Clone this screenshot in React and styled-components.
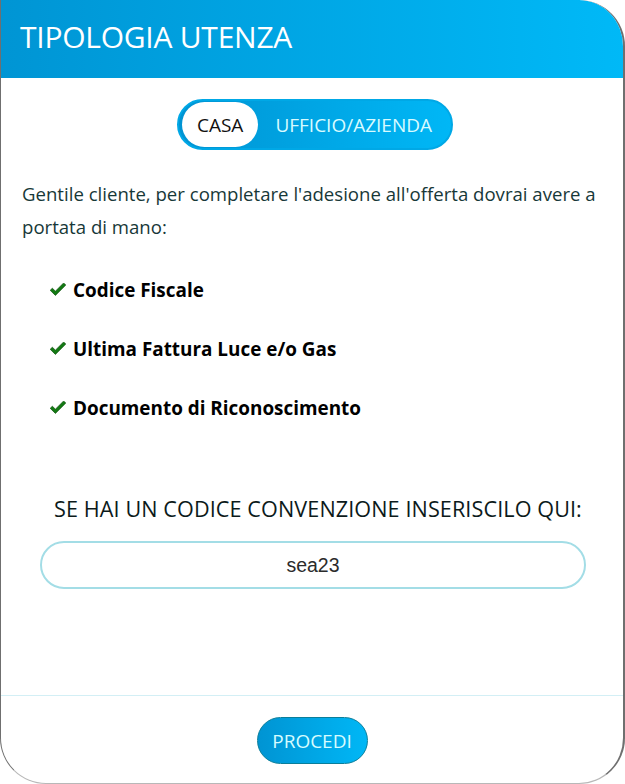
import React, { useState } from "react";
import styled, { createGlobalStyle } from "styled-components";

const GlobalStyle = createGlobalStyle`
  html, body {
    margin: 0;
    padding: 0;
    background: #ffffff;
  }
  body {
    font-family: "Open Sans", "Noto Sans", sans-serif;
  }
`;

const Modal = styled.div`
  width: 625px;
  height: 784px;
  box-sizing: border-box;
  display: flex;
  flex-direction: column;
  background: #fff;
  border-left: 1px solid #6f6f6f;
  border-right: 2px solid #6f6f6f;
  border-bottom: 1px solid #b8b8b8;
  border-radius: 0 46px 46px 46px;
  overflow: hidden;
`;

const Header = styled.div`
  height: 78px;
  flex-shrink: 0;
  display: flex;
  align-items: center;
  box-sizing: border-box;
  padding: 0 0 5px 20px;
  margin: 0 -2px 0 -1px;
  background: linear-gradient(90deg, #0095d4 0%, #00b9f7 100%);
  border-top-right-radius: 46px;
`;

const Title = styled.h1`
  margin: 0;
  color: #fff;
  font-size: 30px;
  font-weight: 400;
  letter-spacing: -0.25px;
`;

const Body = styled.div`
  flex: 1;
  display: flex;
  flex-direction: column;
  padding: 21px 14px 0 20px;
`;

const ToggleWrap = styled.div`
  align-self: center;
  display: flex;
  align-items: center;
  padding: 1px 3px;
  border: 2px solid #00a8e6;
  border-radius: 30px;
  background: linear-gradient(90deg, #0094d3 0%, #00b7f6 100%);
`;

const ToggleOption = styled.button`
  border: none;
  cursor: pointer;
  font-family: inherit;
  font-size: 19px;
  height: 45px;
  border-radius: 23px;
  padding: ${(p) => (p.$active ? "0 15px" : "0 16px 0 17px")};
  background: ${(p) => (p.$active ? "#fff" : "transparent")};
  color: ${(p) => (p.$active ? "#111" : "#d8fbff")};
`;

const Intro = styled.p`
  margin: 27px 0 0 1px;
  font-size: 18.6px;
  line-height: 33px;
  color: #173838;
`;

const List = styled.ul`
  list-style: none;
  margin: 34px 0 0 0;
  padding: 0 0 0 28px;
  display: flex;
  flex-direction: column;
  gap: 34px;
`;

const Item = styled.li`
  display: flex;
  align-items: center;
  gap: 6px;
  font-size: 18.9px;
  font-weight: 700;
  color: #000;
  height: 25px;
`;

const Check = () => (
  <svg width="18" height="14" viewBox="0 0 18 14">
    <path
      d="M1.2 7.3 L6.4 12.4 L16.8 2 L14.6 0 L6.4 8.2 L3.4 5.2 Z"
      fill="#137a13"
      stroke="#0c4f0c"
      strokeWidth="0.7"
    />
  </svg>
);

const CodeLabel = styled.h2`
  margin: 74px 0 0 6px;
  text-align: center;
  font-size: 21.6px;
  font-weight: 400;
  color: #0c1a1a;
  letter-spacing: 0.1px;
`;

const CodeInput = styled.input`
  margin: 18px 23px 0 19px;
  height: 48px;
  box-sizing: border-box;
  border: 2px solid #a3dde6;
  border-radius: 24px;
  text-align: center;
  font-family: "Liberation Sans", Arial, sans-serif;
  font-size: 19.5px;
  color: #2b2b2b;
  outline: none;
`;

const Footer = styled.div`
  height: 88px;
  flex-shrink: 0;
  display: flex;
  justify-content: center;
  align-items: flex-start;
  padding-top: 21px;
  box-sizing: border-box;
  border-top: 1px solid #d3eff5;
`;

const ProceedButton = styled.button`
  width: 111px;
  height: 47px;
  border: 1px solid #0a7e9a;
  border-radius: 24px;
  background: linear-gradient(90deg, #0094d3 0%, #00b7f6 100%);
  color: #d6fcff;
  font-family: inherit;
  font-size: 19px;
  cursor: pointer;
`;

const items = [
  "Codice Fiscale",
  "Ultima Fattura Luce e/o Gas",
  "Documento di Riconoscimento",
];

export default function App() {
  const [type, setType] = useState("casa");
  const [code, setCode] = useState("sea23");

  return (
    <>
      <GlobalStyle />
      <Modal>
        <Header>
          <Title>TIPOLOGIA UTENZA</Title>
        </Header>
        <Body>
          <ToggleWrap>
            <ToggleOption $active={type === "casa"} onClick={() => setType("casa")}>
              CASA
            </ToggleOption>
            <ToggleOption $active={type === "ufficio"} onClick={() => setType("ufficio")}>
              UFFICIO/AZIENDA
            </ToggleOption>
          </ToggleWrap>
          <Intro>
            Gentile cliente, per completare l'adesione all'offerta dovrai avere a portata di mano:
          </Intro>
          <List>
            {items.map((text) => (
              <Item key={text}>
                <Check />
                {text}
              </Item>
            ))}
          </List>
          <CodeLabel>SE HAI UN CODICE CONVENZIONE INSERISCILO QUI:</CodeLabel>
          <CodeInput value={code} onChange={(e) => setCode(e.target.value)} />
        </Body>
        <Footer>
          <ProceedButton>PROCEDI</ProceedButton>
        </Footer>
      </Modal>
    </>
  );
}
